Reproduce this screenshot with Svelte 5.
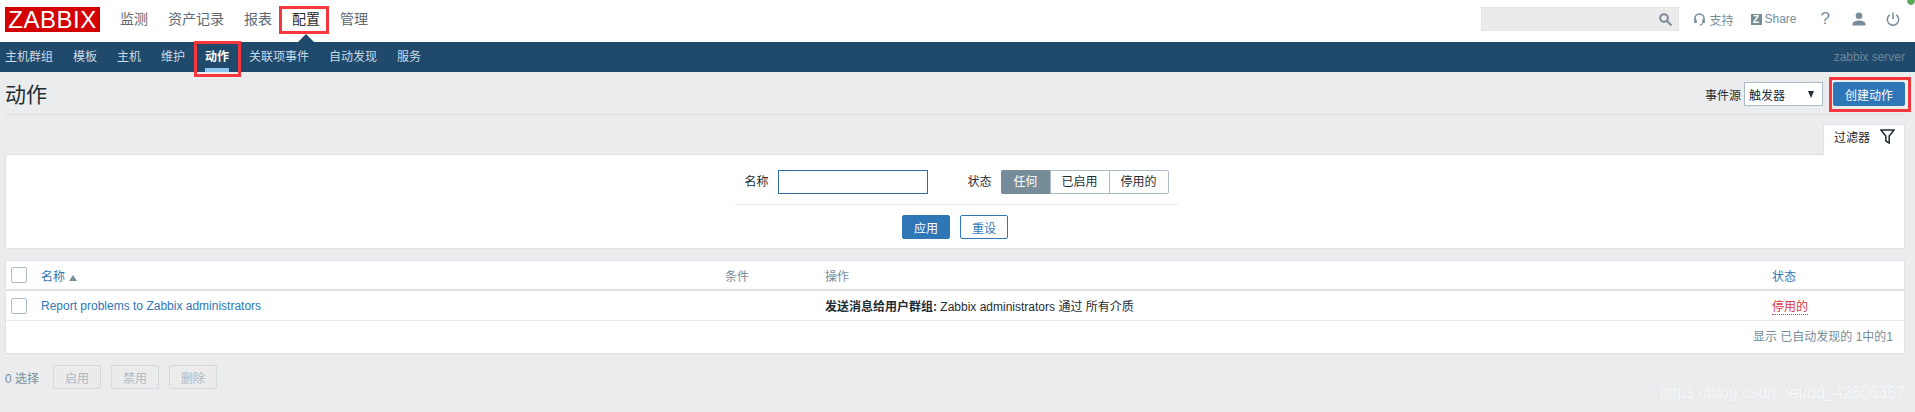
<script>
  const menu = ['监测', '资产记录', '报表', '配置', '管理'];
  const subMenu = ['主机群组', '模板', '主机', '维护', '动作', '关联项事件', '自动发现', '服务'];
  const stateOptions = ['任何', '已启用', '停用的'];
  const massActions = ['启用', '禁用', '删除'];
</script>

<div class="page">
  <header class="top">
    <div class="logo">ZABBIX</div>
    <nav class="menu">
      {#each menu as item}
        <a href="#top" class:current={item === '配置'}>{item}</a>
      {/each}
    </nav>
    <div class="tools">
      <div class="search">
        <svg width="13" height="13" viewBox="0 0 13 13" fill="none" stroke="#7b8a96" stroke-width="2">
          <circle cx="5" cy="5" r="3.8" />
          <path d="M7.8 7.800 12.500 12.500" />
        </svg>
      </div>
      <a class="tool support" href="#top">
        <svg width="11" height="13" viewBox="0 0 11 13" fill="none" stroke="#768d99" stroke-width="1.6">
          <path d="M1 8V5.500a4.500 4.500 0 0 1 9 0V8" />
          <path d="M1.500 6.500v3.500M9.500 6.500v3.500" stroke-width="2.600" />
          <path d="M9 10.500 6 12.300" stroke-width="1.200" />
        </svg>
        支持
      </a>
      <a class="tool share" href="#top"><span class="z">Z</span>Share</a>
      <a class="tool help" href="#top">?</a>
      <svg class="user" width="14" height="14" viewBox="0 0 14 14" fill="#768d99">
        <circle cx="7" cy="3.800" r="3.300" />
        <path d="M0.500 13.500v-1.500C0.500 9.800 4 8.500 7 8.500s6.500 1.300 6.500 3.500v1.500z" />
      </svg>
      <svg class="power" width="14" height="14" viewBox="0 0 14 14" fill="none" stroke="#768d99" stroke-width="1.500">
        <path d="M3.800 2.800a5.700 5.700 0 1 0 6.400 0" />
        <path d="M7 0.500v6.500" />
      </svg>
    </div>
    <span class="status-dot"></span>
  </header>

  <nav class="submenu">
    {#each subMenu as item}
      <a href="#top" class:active={item === '动作'}>{item}</a>
    {/each}
    <span class="server">zabbix server</span>
  </nav>

  <main class="content">
    <div class="title-row">
      <h1>动作</h1>
      <div class="title-controls">
        <span class="label">事件源</span>
        <div class="select">触发器<span class="arrow"></span></div>
        <button class="primary create">创建动作</button>
      </div>
    </div>

    <div class="filter-tabs">
      <div class="filter-tab">
        过滤器
        <svg width="15" height="15" viewBox="0 0 15 15" fill="none" stroke="#1f2c33" stroke-width="1.500">
          <path d="M1 1h13L9.200 7v7L5.800 12V7z" />
        </svg>
      </div>
    </div>

    <section class="filter">
      <div class="filter-fields">
        <div class="field">
          <label for="name">名称</label>
          <input id="name" type="text" />
        </div>
        <div class="field">
          <span class="label">状态</span>
          <div class="segments">
            {#each stateOptions as opt, i}
              <span class="segment" class:on={i === 0}>{opt}</span>
            {/each}
          </div>
        </div>
      </div>
      <div class="filter-buttons">
        <button class="primary">应用</button>
        <button class="outline">重设</button>
      </div>
    </section>

    <section class="list">
      <div class="row head">
        <span class="check"></span>
        <span class="link">名称 <i class="sort"></i></span>
        <span>条件</span>
        <span>操作</span>
        <span class="link">状态</span>
      </div>
      <div class="row item">
        <span class="check"></span>
        <a class="link" href="#top">Report problems to Zabbix administrators</a>
        <span></span>
        <span><b>发送消息给用户群组:</b> Zabbix administrators 通过 所有介质</span>
        <span><a class="disabled" href="#top">停用的</a></span>
      </div>
      <div class="paging">显示 已自动发现的 1中的1</div>
    </section>

    <div class="mass">
      <span class="selected">0 选择</span>
      {#each massActions as action}
        <button class="off">{action}</button>
      {/each}
    </div>
  </main>

  <div class="watermark">https://blog.csdn.net/qq_42606357</div>
</div>

<style>
  :global(body) {
    margin: 0;
    background: #ebecee;
  }

  .page {
    position: relative;
    height: 412px;
    overflow: hidden;
    background: #ebecee;
    color: #1f2c33;
    font-family: Arial, "Liberation Sans", "Noto Sans CJK SC", sans-serif;
    font-size: 12px;
  }

  a {
    text-decoration: none;
    color: inherit;
  }

  /* top bar */
  .top {
    position: relative;
    display: flex;
    align-items: flex-start;
    height: 42px;
    padding: 7px 0 0 5px;
    box-sizing: border-box;
    background: #fff;
  }

  .logo {
    width: 95px;
    height: 25px;
    background: #d40000;
    color: #fff;
    font-size: 24px;
    line-height: 25px;
    text-align: center;
    letter-spacing: 0.5px;
  }

  .menu {
    display: flex;
    gap: 20px;
    margin-left: 20px;
    font-size: 14px;
    line-height: 24px;
    color: #5c6b76;
  }

  .menu a {
    position: relative;
  }

  .menu .current {
    color: #1f2c33;
  }

  /* red annotation round the menu entry */
  .menu .current::after {
    content: '';
    position: absolute;
    left: -13px;
    right: -9px;
    top: -1px;
    bottom: -3px;
    border: 3px solid #f6383e;
  }

  .menu .current::before {
    content: '';
    position: absolute;
    left: 6px;
    top: 27px;
    border-left: 8px solid transparent;
    border-right: 8px solid transparent;
    border-bottom: 8px solid #1f4a6c;
  }

  .tools {
    display: flex;
    align-items: center;
    margin-left: auto;
    height: 24px;
    color: #768d99;
  }

  .search {
    display: flex;
    align-items: center;
    justify-content: flex-end;
    width: 198px;
    height: 24px;
    box-sizing: border-box;
    padding-right: 6px;
    background: #ebebeb;
    border: 1px solid #e2e4e6;
  }

  .tool {
    display: flex;
    align-items: center;
    gap: 4px;
  }

  .support {
    margin-left: 15px;
  }

  .share {
    margin-left: 17px;
    gap: 3px;
  }

  .z {
    width: 11px;
    height: 11px;
    background: #768d99;
    color: #fff;
    font-size: 10px;
    font-weight: 700;
    line-height: 11px;
    text-align: center;
  }

  .help {
    margin-left: 24px;
    font-size: 17px;
  }

  .user {
    margin-left: 22px;
  }

  .power {
    margin-left: 20px;
    margin-right: 15px;
  }

  .status-dot {
    position: absolute;
    right: 0;
    top: -3px;
    width: 6px;
    height: 6px;
    border-radius: 50%;
    background: #4caf50;
    border: 1px solid #8a9a90;
  }

  /* second level nav */
  .submenu {
    display: flex;
    gap: 20px;
    height: 30px;
    padding: 0 10px 0 5px;
    background: #1f4a6c;
    color: #c9dbe8;
    line-height: 30px;
  }

  .submenu a {
    position: relative;
  }

  .submenu .active {
    color: #fff;
    font-weight: 700;
    box-shadow: inset 0 -4px 0 #8ec8f0;
  }

  .submenu .active::after {
    content: '';
    position: absolute;
    left: -11px;
    right: -12px;
    top: -1px;
    bottom: -5px;
    border: 3px solid #f6383e;
  }

  .server {
    margin-left: auto;
    color: #6f8797;
  }

  /* page title */
  .title-row {
    display: flex;
    align-items: center;
    justify-content: space-between;
    height: 42px;
    margin: 0 10px 0 5px;
    border-bottom: 1px solid #dfe2e5;
  }

  h1 {
    margin: 0;
    font-size: 21px;
    font-weight: 400;
  }

  .title-controls {
    display: flex;
    align-items: center;
    margin-top: 2px;
  }

  .select {
    display: flex;
    justify-content: space-between;
    align-items: center;
    width: 79px;
    height: 24px;
    box-sizing: border-box;
    margin: 0 10px 0 3px;
    padding: 0 8px 0 4px;
    background: #fff;
    border: 1px solid #acbbc7;
  }

  .arrow {
    border-left: 3.500px solid transparent;
    border-right: 3.500px solid transparent;
    border-top: 7px solid #1f2c33;
  }

  button {
    width: 48px;
    height: 24px;
    padding: 0;
    border-radius: 2px;
    font-family: inherit;
    font-size: 12px;
  }

  .primary {
    background: #2f76b7;
    border: 1px solid #2f76b7;
    color: #fff;
  }

  .create {
    position: relative;
    width: 72px;
  }

  .create::after {
    content: '';
    position: absolute;
    left: -5px;
    right: -7px;
    top: -6px;
    bottom: -7px;
    border: 3px solid #f6383e;
  }

  .outline {
    background: #fff;
    border: 1px solid #2f76b7;
    color: #2f76b7;
  }

  /* filter */
  .filter-tabs {
    display: flex;
    justify-content: flex-end;
    height: 30px;
    margin: 9px 10px 0 5px;
  }

  .filter-tab {
    position: relative;
    display: flex;
    align-items: center;
    gap: 10px;
    width: 82px;
    height: 31px;
    box-sizing: border-box;
    padding: 0 5px 7px 10px;
    background: #fff;
    border: 1px solid #dfe2e5;
    border-bottom: 0;
  }

  .filter {
    height: 95px;
    box-sizing: border-box;
    margin: 0 10px 0 5px;
    padding-top: 15px;
    background: #fff;
    border: 1px solid #dfe2e5;
  }

  .filter-fields {
    display: flex;
    justify-content: center;
    gap: 39px;
    width: 443px;
    height: 34px;
    margin-left: 729px;
    border-bottom: 1px solid #ebecee;
  }

  .field {
    display: flex;
    align-items: flex-start;
    gap: 10px;
    line-height: 24px;
  }

  input {
    width: 150px;
    height: 24px;
    box-sizing: border-box;
    margin: 0;
    background: #fff;
    border: 1px solid #2b6ca3;
    outline: none;
  }

  .segments {
    display: flex;
    height: 24px;
    box-sizing: border-box;
    border: 1px solid #acbbc7;
    border-radius: 2px;
    line-height: 22px;
  }

  .segment {
    padding: 0 11px;
    border-left: 1px solid #acbbc7;
  }

  .segment.on {
    margin: -1px 0 -1px -1px;
    padding: 1px 12px;
    background: #768d99;
    color: #fff;
    border-left: 0;
    border-radius: 2px 0 0 2px;
  }

  .filter-buttons {
    display: flex;
    justify-content: center;
    gap: 10px;
    margin-top: 10px;
  }

  /* table */
  .list {
    margin: 11px 10px 0 5px;
    background: #fff;
    border: 1px solid #dfe2e5;
  }

  .row {
    display: grid;
    grid-template-columns: 35px 684px 100px 947px 1fr;
    align-items: center;
  }

  .head {
    height: 28px;
    color: #768d99;
    border-bottom: 2px solid #dfe2e5;
  }

  .item {
    height: 30px;
    box-sizing: border-box;
    border-bottom: 1px solid #ebecee;
  }

  .check {
    width: 16px;
    height: 16px;
    box-sizing: border-box;
    margin-left: 5px;
    background: #fff;
    border: 1px solid #acbbc7;
    border-radius: 2px;
  }

  .link {
    color: #2f76b7;
  }

  .sort {
    display: inline-block;
    margin-left: 1px;
    border-left: 4px solid transparent;
    border-right: 4px solid transparent;
    border-bottom: 6px solid #768d99;
  }

  .disabled {
    color: #d9373f;
    border-bottom: 1px dotted #d9373f;
  }

  .paging {
    height: 32px;
    padding-right: 11px;
    color: #768d99;
    line-height: 32px;
    text-align: right;
  }

  /* footer actions */
  .mass {
    display: flex;
    align-items: center;
    gap: 10px;
    margin: 11px 0 0 5px;
    color: #768d99;
  }

  .selected {
    width: 38px;
  }

  .off {
    background: #ebebeb;
    border: 1px solid #d4d9dc;
    color: #acbbc7;
  }

  .watermark {
    position: absolute;
    right: 10px;
    bottom: 9px;
    color: #f7f8f9;
    font-size: 16px;
    line-height: 20px;
    text-shadow: 0 0 1px #d8dcdf;
  }
</style>
